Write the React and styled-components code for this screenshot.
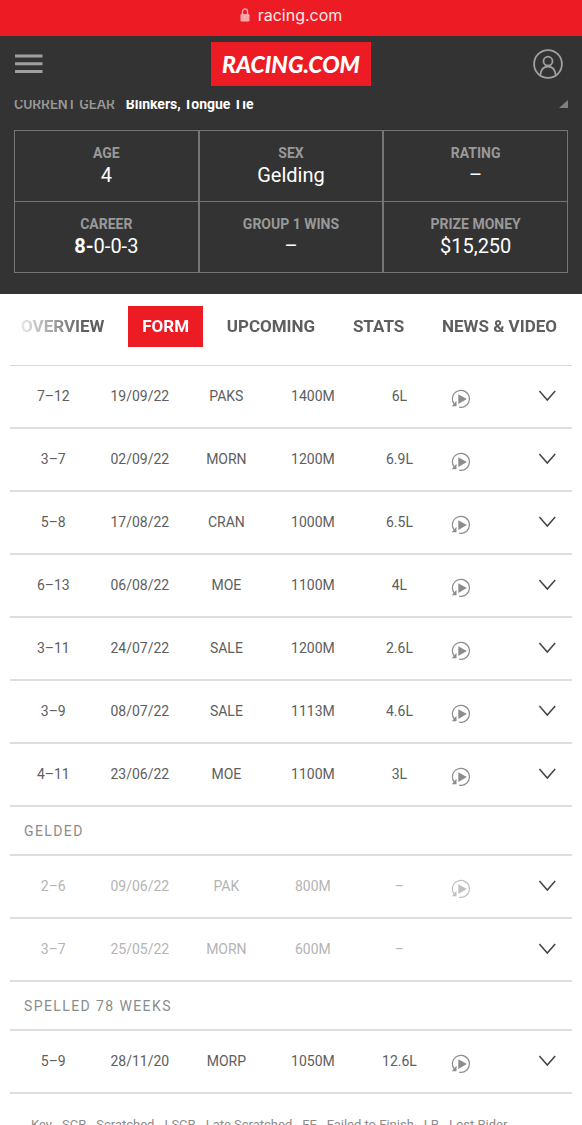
import React from "react";
import styled, { createGlobalStyle } from "styled-components";

const GlobalStyle = createGlobalStyle`
  * { box-sizing: border-box; }
  body {
    margin: 0;
    background: #fff;
    color: #5e5e5e;
    font-family: Roboto, "Liberation Sans", sans-serif;
  }
`;

const Shell = styled.div`
  display: flex;
  flex-direction: column;
  height: 100vh;
  overflow: hidden;
`;

const AddressBar = styled.div`
  flex: none;
  display: flex;
  justify-content: center;
  align-items: center;
  gap: 8px;
  height: 36px;
  padding-bottom: 6px;
  background: #ed1b24;
  color: #fde9ea;
  font-family: Inter, sans-serif;
  font-size: 16px;
  line-height: 20px;
`;

const Header = styled.header`
  flex: none;
  display: grid;
  grid-template-columns: 1fr auto 1fr;
  align-items: center;
  height: 64px;
  padding: 0 14px 8px;
  background: #333;
`;

const IconButton = styled.button`
  display: inline-flex;
  padding: 0;
  border: 0;
  background: none;
  color: ${(p) => p.$color || "#a0a0a0"};
  cursor: pointer;
`;

const AccountButton = styled(IconButton)`
  justify-self: end;
  padding-right: 5px;
`;

const Logo = styled.a`
  display: flex;
  align-items: center;
  justify-content: center;
  height: 44px;
  padding: 0 11px;
  background: #ed1b24;
  color: #fff;
  font-family: Lato, sans-serif;
  font-size: 23px;
  font-weight: 900;
  font-style: italic;
  line-height: 28px;
  text-decoration: none;
`;

const Scroller = styled.main`
  flex: 1;
  min-height: 0;
  overflow-y: auto;
  scrollbar-width: none;
`;

const Profile = styled.section`
  padding: 0 14px 21px;
  background: #333;
`;

const GearRow = styled.div`
  display: flex;
  align-items: flex-end;
  gap: 11px;
  height: 13px;
  margin-bottom: 17px;
  overflow: hidden;
  color: #999;
  font-size: 14px;
  font-weight: 500;
  line-height: 18px;
`;

const GearValue = styled.span`
  flex: 1;
  color: #fff;
  font-weight: 700;
`;

const Corner = styled.svg`
  align-self: flex-start;
`;

const StatGrid = styled.dl`
  display: grid;
  grid-template-columns: repeat(3, 1fr);
  gap: 1px 2px;
  margin: 0;
  border: 1px solid #757575;
  background: #757575;
`;

const Stat = styled.div`
  height: 70px;
  padding-top: 12px;
  background: #333;
  text-align: center;
`;

const StatLabel = styled.dt`
  color: #999;
  font-size: 14px;
  font-weight: 700;
  line-height: 20px;
`;

const StatValue = styled.dd`
  margin: 0;
  color: #fff;
  font-size: 20px;
  line-height: 24px;
`;

const Tabs = styled.nav`
  display: flex;
  justify-content: space-between;
  padding: 12px 11px 18px 7px;
  mask-image: linear-gradient(to right, transparent 10px, #000 84px);
`;

const Tab = styled.a`
  padding: 0 14px;
  background: ${(p) => (p.$active ? "#ed1b24" : "transparent")};
  color: ${(p) => (p.$active ? "#fff" : "#5e5e5e")};
  font-size: 17px;
  font-weight: 700;
  line-height: 41px;
  text-decoration: none;
  white-space: nowrap;
`;

const TableFrame = styled.div`
  padding: 0 10px;
`;

const FormTable = styled.table`
  width: 100%;
  table-layout: fixed;
  border-spacing: 0;
  border-top: 1px solid #d8d8d8;
  font-size: 14px;
  line-height: 20px;
`;

const Col = styled.col`
  width: ${(p) => p.$w};
`;

const Run = styled.tr`
  height: 63px;
  color: ${(p) => (p.$trial ? "#b4b4b4" : "#5e5e5e")};
`;

const Cell = styled.td`
  padding: 0 0 1px;
  border-bottom: 2px solid #dedede;
  text-align: center;
`;

const ReplayCell = styled(Cell)`
  padding: 4px 0 0;
  line-height: 0;
`;

const ToggleCell = styled(Cell)`
  padding: 0 16px 1px 0;
  text-align: right;
  line-height: 0;
`;

const NoteCell = styled.td`
  height: 49px;
  padding: 0 14px;
  border-bottom: 2px solid #dedede;
  color: #8c8c8c;
  font-size: 14px;
  letter-spacing: 0.1em;
`;

const KeyLine = styled.ul`
  display: flex;
  gap: 10px;
  margin: 0;
  padding: 22px 31px;
  list-style: none;
  color: #8c8c8c;
  font-size: 13px;
  line-height: 18px;
  white-space: nowrap;
`;

const LockIcon = () => (
  <svg width="10" height="14" viewBox="0 0 10 14" aria-hidden="true">
    <path d="M2.5 6V3.6a2.5 2.6 0 0 1 5 0V6" fill="none" stroke="#f9a5a9" strokeWidth="1.3" />
    <rect x="0.5" y="6" width="9" height="7.5" rx="1.2" fill="#f9a5a9" />
  </svg>
);

const MenuIcon = () => (
  <svg width="29" height="20" viewBox="0 0 29 20" fill="currentColor" aria-hidden="true">
    <path d="M1 0.5h27.500v3H1zM1 8.300h27.500v3H1zM1 16h27.500v3H1z" />
  </svg>
);

const UserIcon = () => (
  <svg width="30" height="30" viewBox="0 0 30 30" fill="none" stroke="currentColor" strokeWidth="1.8" aria-hidden="true">
    <circle cx="15" cy="15" r="13.900" />
    <circle cx="15" cy="12.200" r="4.500" />
    <path d="M7.300 26.300c.5-5.400 3.400-8.600 7.700-8.600s7.200 3.200 7.700 8.600" />
  </svg>
);

const ReplayIcon = () => (
  <svg width="20" height="20" viewBox="0 0 20 20" aria-hidden="true">
    <path d="M8.200 18.200a8.500 8.500 0 1 0-4.900-3" fill="none" stroke="currentColor" strokeWidth="1.200" />
    <path d="M7.300 5.200v9.800l8.600-4.900z" fill="currentColor" />
    <path d="M5.500 11.800v5.400H0.800z" fill="currentColor" />
  </svg>
);

const ChevronIcon = () => (
  <svg width="18" height="12" viewBox="0 0 18 12" fill="none" stroke="currentColor" strokeWidth="1.500" aria-hidden="true">
    <path d="M1.400 1l7.900 9 7.900-9" />
  </svg>
);

const stats = [
  ["AGE", "4"],
  ["SEX", "Gelding"],
  ["RATING", "–"],
  ["CAREER", <React.Fragment key="c"><b>8-</b>0-0-3</React.Fragment>],
  ["GROUP 1 WINS", "–"],
  ["PRIZE MONEY", "$15,250"],
];

const tabs = ["OVERVIEW", "FORM", "UPCOMING", "STATS", "NEWS & VIDEO"];

const entries = [
  { cells: ["7–12", "19/09/22", "PAKS", "1400M", "6L"], replay: true },
  { cells: ["3–7", "02/09/22", "MORN", "1200M", "6.9L"], replay: true },
  { cells: ["5–8", "17/08/22", "CRAN", "1000M", "6.5L"], replay: true },
  { cells: ["6–13", "06/08/22", "MOE", "1100M", "4L"], replay: true },
  { cells: ["3–11", "24/07/22", "SALE", "1200M", "2.6L"], replay: true },
  { cells: ["3–9", "08/07/22", "SALE", "1113M", "4.6L"], replay: true },
  { cells: ["4–11", "23/06/22", "MOE", "1100M", "3L"], replay: true },
  { note: "GELDED" },
  { cells: ["2–6", "09/06/22", "PAK", "800M", "–"], replay: true, trial: true },
  { cells: ["3–7", "25/05/22", "MORN", "600M", "–"], trial: true },
  { note: "SPELLED 78 WEEKS" },
  { cells: ["5–9", "28/11/20", "MORP", "1050M", "12.6L"], replay: true },
];

const keys = ["Key", "SCR - Scratched", "LSCR - Late Scratched", "FF - Failed to Finish", "LR - Lost Rider"];

function Entry({ entry }) {
  if (entry.note) {
    return (
      <tr>
        <NoteCell colSpan={7}>{entry.note}</NoteCell>
      </tr>
    );
  }
  return (
    <Run $trial={entry.trial}>
      {entry.cells.map((text, i) => (
        <Cell key={i}>{text}</Cell>
      ))}
      <ReplayCell>
        {entry.replay && (
          <IconButton type="button" aria-label="Watch replay" $color={entry.trial ? "#c0c0c0" : "#8c8c8c"}>
            <ReplayIcon />
          </IconButton>
        )}
      </ReplayCell>
      <ToggleCell>
        <IconButton type="button" aria-label="Show run details" $color="#444">
          <ChevronIcon />
        </IconButton>
      </ToggleCell>
    </Run>
  );
}

export default function App() {
  return (
    <Shell>
      <GlobalStyle />
      <AddressBar>
        <LockIcon />
        <span>racing.com</span>
      </AddressBar>
      <Header>
        <IconButton type="button" aria-label="Menu">
          <MenuIcon />
        </IconButton>
        <Logo href="#">RACING.COM</Logo>
        <AccountButton type="button" aria-label="Account">
          <UserIcon />
        </AccountButton>
      </Header>
      <Scroller>
        <Profile>
          <GearRow>
            <span>CURRENT GEAR</span>
            <GearValue>Blinkers, Tongue Tie</GearValue>
            <Corner width="9" height="8" viewBox="0 0 9 8" aria-hidden="true">
              <path d="M9 0v8H0z" fill="#808080" />
            </Corner>
          </GearRow>
          <StatGrid>
            {stats.map(([label, value]) => (
              <Stat key={label}>
                <StatLabel>{label}</StatLabel>
                <StatValue>{value}</StatValue>
              </Stat>
            ))}
          </StatGrid>
        </Profile>
        <Tabs>
          {tabs.map((tab) => (
            <Tab key={tab} href="#" $active={tab === "FORM"}>
              {tab}
            </Tab>
          ))}
        </Tabs>
        <TableFrame>
          <FormTable>
            <colgroup>
              {[0, 1, 2, 3, 4].map((i) => (
                <Col key={i} $w="15.4%" />
              ))}
              <Col $w="6.5%" />
              <Col $w="16.5%" />
            </colgroup>
            <tbody>
              {entries.map((entry, i) => (
                <Entry key={i} entry={entry} />
              ))}
            </tbody>
          </FormTable>
        </TableFrame>
        <KeyLine>
          {keys.map((text) => (
            <li key={text}>{text}</li>
          ))}
        </KeyLine>
      </Scroller>
    </Shell>
  );
}
